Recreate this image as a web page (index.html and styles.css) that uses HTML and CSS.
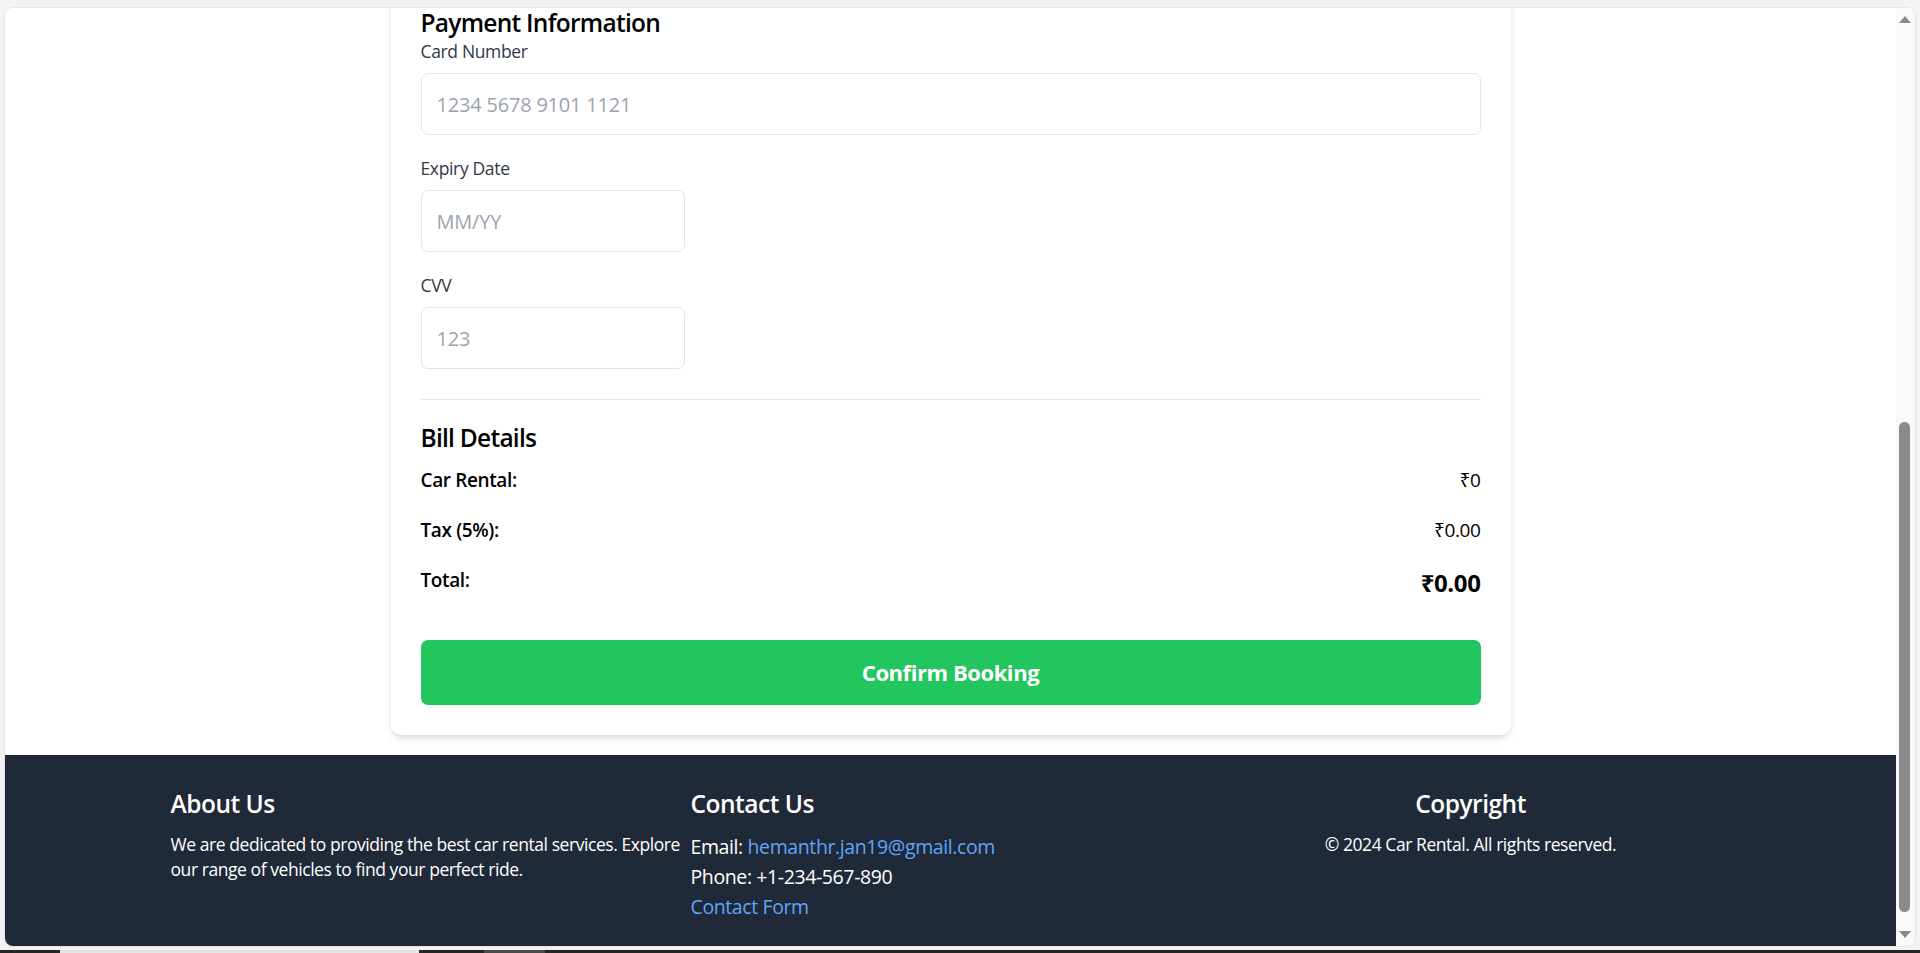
FILE: index.html
```html
<!DOCTYPE html>
<html lang="en">
<head>
<meta charset="utf-8">
<title>Car Rental - Booking</title>
<link rel="stylesheet" href="styles.css">
</head>
<body>
<div class="desktop">
  <div class="window">
    <div class="viewport">
      <main class="page">
        <div class="card">
          <section class="payment">
            <h2 class="section-title payment-title">Payment Information</h2>
            <div class="field">
              <label class="field-label" for="card">Card Number</label>
              <input class="input input-full" id="card" type="text" placeholder="1234 5678 9101 1121">
            </div>
            <div class="field">
              <label class="field-label" for="expiry">Expiry Date</label>
              <input class="input input-quarter" id="expiry" type="text" placeholder="MM/YY">
            </div>
            <div class="field">
              <label class="field-label" for="cvv">CVV</label>
              <input class="input input-quarter" id="cvv" type="text" placeholder="123">
            </div>
          </section>
          <section class="bill">
            <h2 class="section-title bill-title">Bill Details</h2>
            <div class="bill-row">
              <span class="bill-label">Car Rental:</span>
              <span class="bill-value">₹0</span>
            </div>
            <div class="bill-row">
              <span class="bill-label">Tax (5%):</span>
              <span class="bill-value">₹0.00</span>
            </div>
            <div class="bill-row">
              <span class="bill-label">Total:</span>
              <span class="bill-value bill-total">₹0.00</span>
            </div>
          </section>
          <button class="confirm" type="button">Confirm Booking</button>
        </div>
      </main>
      <footer class="footer">
        <div class="footer-inner">
          <div class="footer-col">
            <h3 class="footer-title">About Us</h3>
            <p class="footer-text">We are dedicated to providing the best car rental services. Explore our range of vehicles to find your perfect ride.</p>
          </div>
          <div class="footer-col">
            <h3 class="footer-title">Contact Us</h3>
            <p class="contact-line">Email: <a class="footer-link" href="#">hemanthr.jan19@gmail.com</a></p>
            <p class="contact-line">Phone: +1-234-567-890</p>
            <p class="contact-line"><a class="footer-link" href="#">Contact Form</a></p>
          </div>
          <div class="footer-col footer-col-center">
            <h3 class="footer-title">Copyright</h3>
            <p class="footer-text">© 2024 Car Rental. All rights reserved.</p>
          </div>
        </div>
      </footer>
    </div>
    <div class="scrollbar">
      <span class="arrow arrow-up"></span>
      <span class="thumb"></span>
      <span class="arrow arrow-down"></span>
    </div>
  </div>
  <div class="taskbar">
    <span class="tb-seg tb-dark tb-w60"></span>
    <span class="tb-seg tb-light tb-w359"></span>
    <span class="tb-seg tb-dark tb-w65"></span>
    <span class="tb-seg tb-mid tb-w61"></span>
    <span class="tb-seg tb-dark tb-rest"></span>
  </div>
</div>
</body>
</html>
```

FILE: styles.css
```css
* {
  box-sizing: border-box;
}

html, body {
  margin: 0;
  padding: 0;
}

body {
  font-family: "Open Sans", "Noto Sans", "Liberation Sans", sans-serif;
  background: #f3f3f3;
  color: #000;
}

.desktop {
  width: 1920px;
  height: 953px;
  display: flex;
  flex-direction: column;
  overflow: hidden;
}

.window {
  margin: 8px 5px 0 5px;
  height: 938px;
  display: flex;
  border-radius: 8px;
  overflow: hidden;
  background: #fff;
  box-shadow: 0 0 0 1px #e4e4e4;
}

.viewport {
  flex: 1;
  display: flex;
  flex-direction: column;
  overflow: hidden;
  background: #fff;
}

.page {
  padding-bottom: 20px;
}

.card {
  width: 1120px;
  margin: -30px auto 0;
  padding: 30px;
  display: flex;
  flex-direction: column;
  background: #fff;
  border-radius: 10px;
  box-shadow: 0 5px 8px -1px rgba(0, 0, 0, 0.1), 0 2px 5px -2px rgba(0, 0, 0, 0.1);
}

.section-title {
  margin: 0;
  font-size: 24.5px;
  line-height: 35px;
  font-weight: 600;
  letter-spacing: -0.03em;
  color: #000;
}

.payment-title {
  line-height: 29px;
  margin-bottom: 2px;
}

.payment {
  padding-bottom: 9px;
}

.field {
  margin-bottom: 21px;
}

.field-label {
  display: block;
  margin-bottom: 9px;
  font-size: 17.5px;
  line-height: 25px;
  font-weight: 500;
  letter-spacing: -0.02em;
  color: #2f3846;
}

.input {
  display: block;
  height: 62px;
  padding: 0 15px;
  border: 1px solid #e2e6eb;
  border-radius: 7px;
  font-family: inherit;
  font-size: 20px;
  color: #111;
  background: #fff;
  outline: none;
}

.input::placeholder {
  color: #9ca3af;
  letter-spacing: -0.01em;
}

.input-full {
  width: 100%;
}

.input-quarter {
  width: 264px;
}

.bill {
  border-top: 1px solid #e5e7eb;
  padding-top: 20px;
}

.bill-title {
  margin-bottom: 10px;
}

.bill-row {
  display: flex;
  justify-content: space-between;
  margin-bottom: 20px;
  font-size: 19px;
  line-height: 30px;
  letter-spacing: -0.02em;
}

.bill-label {
  font-weight: 600;
}

.bill-total {
  font-size: 24px;
  line-height: 35px;
  font-weight: 700;
}

.confirm {
  display: block;
  width: 100%;
  margin-top: 20px;
  padding: 15px;
  border: none;
  border-radius: 7px;
  background: #22c55e;
  color: #fff;
  font-family: inherit;
  font-size: 22px;
  line-height: 35px;
  font-weight: 700;
  letter-spacing: -0.02em;
}

.footer {
  flex: 1;
  background: #1f2937;
  color: #fff;
  padding: 31px 0 30px;
}

.footer-inner {
  max-width: 1600px;
  margin: 0 auto;
  padding: 0 20px;
  display: grid;
  grid-template-columns: 1fr 1fr 1fr;
}

.footer-col-center {
  text-align: center;
}

.footer-title {
  margin: 0 0 11px;
  font-size: 24.5px;
  line-height: 35px;
  font-weight: 600;
  letter-spacing: -0.02em;
}

.footer-text {
  margin: 0;
  font-size: 17.5px;
  line-height: 25px;
  letter-spacing: -0.025em;
}

.contact-line {
  margin: 0;
  font-size: 19.5px;
  line-height: 30px;
  letter-spacing: -0.02em;
}

.footer-link {
  color: #60a5fa;
  text-decoration: none;
}

.scrollbar {
  width: 19px;
  display: flex;
  flex-direction: column;
  align-items: center;
  background: #f9f9f9;
  padding-right: 2px;
}

.arrow {
  width: 0;
  height: 0;
  border-left: 6.5px solid transparent;
  border-right: 6.5px solid transparent;
}

.arrow-up {
  margin-top: 8px;
  border-bottom: 7px solid #8a8a8a;
}

.arrow-down {
  margin-top: auto;
  margin-bottom: 8px;
  border-top: 7px solid #8a8a8a;
}

.thumb {
  display: block;
  width: 11px;
  height: 490px;
  margin-top: 399px;
  border-radius: 6px;
  background: #8a8a8a;
}

.taskbar {
  margin-top: 4px;
  height: 3px;
  display: flex;
}

.tb-seg {
  display: block;
  height: 3px;
}

.tb-dark { background: #262626; }
.tb-light { background: #e4e4e4; }
.tb-mid { background: #4a4a4a; }
.tb-w60 { width: 60px; }
.tb-w359 { width: 359px; }
.tb-w65 { width: 65px; }
.tb-w61 { width: 61px; }
.tb-rest { flex: 1; }
```
